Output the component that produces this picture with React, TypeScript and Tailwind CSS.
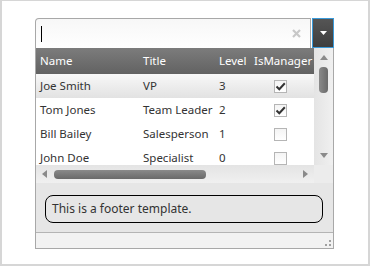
import React from "react";

const rows = [
  { name: "Joe Smith", title: "VP", level: "3", mgr: true },
  { name: "Tom Jones", title: "Team Leader", level: "2", mgr: true },
  { name: "Bill Bailey", title: "Salesperson", level: "1", mgr: false },
  { name: "John Doe", title: "Specialist", level: "0", mgr: false },
];

function Check({ on }: { on: boolean }) {
  return (
    <div className="w-[13px] h-[13px] border border-[#b5b5b5] bg-gradient-to-b from-[#f4f4f4] to-white flex items-center justify-center">
      {on && (
        <svg width="11" height="11" viewBox="0 0 11 11">
          <path d="M1.5 5.5 L4.3 8.3 L9.8 2.3" stroke="#333" strokeWidth="2" fill="none" />
        </svg>
      )}
    </div>
  );
}

export default function App() {
  return (
    <div
      className="w-[370px] h-[266px] bg-white border-t border-l-2 border-r-2 border-b-2 border-[#d6d6d6] pl-[33px] pt-[17px] text-[11.5px]"
      style={{ fontFamily: '"Noto Sans", "Open Sans", sans-serif' }}
    >
      <div className="w-[299px] flex flex-col">
        <div className="flex h-[30px]">
          <div className="flex-1 flex items-center border border-b-0 border-[#a8a8a8] rounded-tl-[4px] bg-gradient-to-b from-[#f7f7f7] to-white pl-[5px] pr-[9px]">
            <div className="w-[1px] h-[16px] bg-black" />
            <div className="flex-1" />
            <svg width="9" height="9" viewBox="0 0 9 9">
              <path d="M1 1 L8 8 M8 1 L1 8" stroke="#c8c8c8" strokeWidth="2.2" />
            </svg>
          </div>
          <div className="w-[22px] ml-[1px] bg-gradient-to-b from-[#555] to-[#3e3e3e] border border-[#3a9ad9] flex items-center justify-center">
            <svg width="7" height="4" viewBox="0 0 7 4">
              <path d="M0 0 L7 0 L3.5 4 Z" fill="#fff" />
            </svg>
          </div>
        </div>
        <div className="border-l border-r border-b border-[#a8a8a8] flex flex-col">
          <div className="flex h-[117px]">
            <div className="w-[278px] overflow-hidden">
              <div className="flex h-[26px] items-center text-white bg-gradient-to-b from-[#7c7c7c] to-[#626262]">
                <div className="w-[103px] pl-[4px]">Name</div>
                <div className="w-[76px] pl-[4px]">Title</div>
                <div className="w-[34px] pl-[4px]">Level</div>
                <div className="flex-1 pl-[5px] whitespace-nowrap">IsManager</div>
              </div>
              {rows.map((r, i) => (
                <div
                  key={r.name}
                  className={
                    "flex h-[24px] items-center text-[#333] whitespace-nowrap " +
                    (i === 0 ? "bg-gradient-to-b from-[#f8f8f8] to-[#e2e2e2]" : "bg-white")
                  }
                >
                  <div className="w-[103px] pl-[4px]">{r.name}</div>
                  <div className="w-[76px] pl-[4px]">{r.title}</div>
                  <div className="w-[34px] pl-[4px]">{r.level}</div>
                  <div className="flex-1 flex pl-[25px]">
                    <Check on={r.mgr} />
                  </div>
                </div>
              ))}
            </div>
            <div className="w-[19px] bg-gradient-to-r from-[#e4e4e4] to-[#f0f0f0] flex flex-col items-center">
              <div className="h-[19px] flex items-center justify-center">
                <svg width="8" height="5" viewBox="0 0 8 5">
                  <path d="M0 5 L8 5 L4 0 Z" fill="#8a8a8a" />
                </svg>
              </div>
              <div className="w-[9px] h-[26px] rounded-[4px] bg-gradient-to-r from-[#8a8a8a] to-[#6a6a6a]" />
              <div className="flex-1" />
              <div className="h-[19px] flex items-center justify-center">
                <svg width="8" height="5" viewBox="0 0 8 5">
                  <path d="M0 0 L8 0 L4 5 Z" fill="#8a8a8a" />
                </svg>
              </div>
            </div>
          </div>
          <div className="flex h-[18px]">
            <div className="w-[278px] bg-gradient-to-b from-[#e4e4e4] to-[#f0f0f0] flex items-center px-[6px]">
              <svg width="5" height="8" viewBox="0 0 5 8">
                <path d="M5 0 L5 8 L0 4 Z" fill="#8a8a8a" />
              </svg>
              <div className="ml-[7px] w-[152px] h-[9px] rounded-[4px] bg-gradient-to-b from-[#8a8a8a] to-[#6a6a6a]" />
              <div className="flex-1" />
              <svg width="5" height="8" viewBox="0 0 5 8">
                <path d="M0 0 L0 8 L5 4 Z" fill="#8a8a8a" />
              </svg>
            </div>
            <div className="flex-1 bg-[#ececec]" />
          </div>
          <div className="h-[49px] bg-[#e6e6e6] pt-[12px] pl-[9px] pr-[10px]">
            <div className="h-[28px] border border-black rounded-[8px] flex items-center pl-[6px] text-[#333] text-[12px]">
              This is a footer template.
            </div>
          </div>
          <div className="h-[16px] border-t border-[#b4b4b4] bg-[#f2f2f2] flex items-end justify-end pr-[2px] pb-[2px]">
            <svg width="6" height="6" viewBox="0 0 6 6">
              <rect x="4" y="0" width="2" height="2" fill="#a0a0a0" />
              <rect x="0" y="4" width="2" height="2" fill="#a0a0a0" />
              <rect x="4" y="4" width="2" height="2" fill="#a0a0a0" />
            </svg>
          </div>
        </div>
      </div>
    </div>
  );
}
